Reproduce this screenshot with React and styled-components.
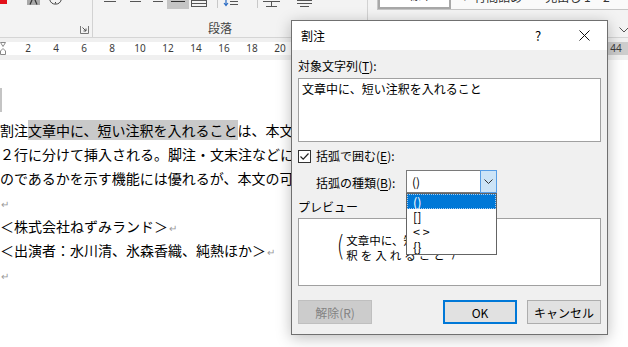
import styled, { createGlobalStyle } from 'styled-components';

const GlobalStyle = createGlobalStyle`
  html, body {
    margin: 0;
    padding: 0;
    background: #fff;
  }
  body {
    font-family: "Noto Sans CJK JP", "Noto Sans", sans-serif;
    color: #000;
  }
`;

const Screen = styled.div`
  position: relative;
  width: 628px;
  height: 347px;
  overflow: hidden;
  display: flex;
  flex-direction: column;
  background: #fff;
`;

/* ---------- ribbon ---------- */

const Ribbon = styled.div`
  flex: none;
  display: flex;
  height: 37px;
  background: #f3f3f3;
  border-bottom: 1px solid #d5d5d5;
`;

const Group = styled.div`
  flex: ${({ $w }) => ($w ? 'none' : '1')};
  width: ${({ $w }) => ($w ? `${$w}px` : 'auto')};
  display: flex;
  flex-direction: column;
  border-right: ${({ $last }) => ($last ? 'none' : '1px solid #d2d2d2')};
`;

const Strip = styled.div`
  flex: none;
  height: 10px;
  display: flex;
  align-items: flex-start;
`;

const Tool = styled.span`
  flex: none;
  display: block;
  width: ${({ $w }) => $w}px;
  height: ${({ $h }) => $h || 9}px;
  margin-left: ${({ $ml }) => $ml || 0}px;
  background: ${({ $active }) => ($active ? '#c5c5c5' : 'transparent')};

  svg {
    display: block;
  }
`;

const Sep = styled.span`
  flex: none;
  width: 1px;
  height: 8px;
  margin-left: ${({ $ml }) => $ml}px;
  background: #c8c8c8;
`;

const GroupFoot = styled.div`
  flex: 1;
  display: flex;
  align-items: flex-end;
  justify-content: ${({ $end }) => ($end ? 'flex-end' : 'flex-start')};
  padding: 0 ${({ $pr }) => $pr || 0}px ${({ $pb }) => $pb || 0}px ${({ $pl }) => $pl || 0}px;
`;

const GroupLabel = styled.span`
  font-size: 12px;
  line-height: 16px;
  color: #444;
`;

const Gallery = styled.div`
  flex: none;
  margin-left: 9px;
  height: 9px;
  display: flex;
  align-items: stretch;
  background: #fafafa;
  border-left: 1px solid #c6c6c6;
  border-bottom: 1px solid #c6c6c6;
  overflow: hidden;
`;

const StyleItem = styled.div`
  flex: none;
  width: ${({ $w }) => $w}px;
  box-sizing: border-box;
  display: flex;
  align-items: flex-end;
  justify-content: center;
  padding-bottom: 4px;
  overflow: hidden;
  font-size: 12px;
  line-height: 16px;
  color: #333;
  border: ${({ $active }) => ($active ? '2px solid #a8a8a8' : 'none')};
  border-top: none;
  background: ${({ $active }) => ($active ? '#fff' : 'transparent')};
`;

/* ---------- ruler ---------- */

const Ruler = styled.div`
  flex: none;
  height: 22px;
  box-sizing: border-box;
  padding-top: 4px;
  background: #f0f0f0;
`;

const RulerBand = styled.div`
  display: flex;
  height: 13px;
  background: linear-gradient(to right, #fff 0 588px, #cdcdcd 588px);
`;

const RulerMarker = styled.span`
  flex: none;
  width: 14px;

  svg {
    display: block;
  }
`;

const RulerNum = styled.span`
  flex: none;
  width: 28px;
  text-align: center;
  font-family: "Noto Sans", sans-serif;
  font-size: 10px;
  line-height: 13px;
  color: #3c3c3c;
`;

/* ---------- document ---------- */

const Doc = styled.div`
  flex: 1;
  background: #fff;
  padding-top: 28px;
  font-size: 14px;
  line-height: 24px;
  white-space: nowrap;
`;

const CornerMark = styled.div`
  width: 2px;
  height: 24px;
  margin-bottom: 6px;
  background: #c4c4c4;
`;

const DocLine = styled.div`
  height: 24px;
`;

const Marked = styled.span`
  background: #c9c9c9;
`;

const ParaMark = styled.span`
  font-size: 10px;
  color: #9a9a9a;
  margin-left: 1px;
`;

/* ---------- dialog ---------- */

const Dialog = styled.div`
  position: absolute;
  left: 291px;
  top: 20px;
  width: 317px;
  height: 315px;
  box-sizing: border-box;
  border: 1px solid #707070;
  background: #f0f0f0;
  box-shadow: 0 3px 14px rgba(0, 0, 0, 0.26);
  display: flex;
  flex-direction: column;
  font-size: 12px;
`;

const TitleBar = styled.div`
  flex: none;
  height: 29px;
  display: flex;
  align-items: center;
  background: #fff;
`;

const Title = styled.span`
  flex: 1;
  padding-left: 9px;
  line-height: 16px;
`;

const Caption = styled.span`
  width: 46px;
  height: 29px;
  display: flex;
  align-items: center;
  justify-content: center;
  font-size: 13px;

  svg {
    display: block;
  }
`;

const Body = styled.div`
  flex: 1;
  display: flex;
  flex-direction: column;
  padding: 8px 6px 0;
`;

const FieldLabel = styled.div`
  line-height: 16px;
  margin-top: ${({ $mt }) => $mt || 0}px;

  u {
    text-decoration-thickness: 1px;
    text-underline-offset: 2px;
  }
`;

const TextBox = styled.div`
  margin-top: 4px;
  height: 64px;
  box-sizing: border-box;
  padding: 2px 3px;
  background: #fff;
  border: 1px solid #a0a0a0;
  line-height: 16px;
`;

const CheckRow = styled.label`
  margin-top: 6px;
  height: 16px;
  display: flex;
  align-items: center;
  gap: 5px;
  line-height: 16px;

  u {
    text-underline-offset: 2px;
  }
`;

const CheckBox = styled.span`
  flex: none;
  width: 13px;
  height: 13px;
  box-sizing: border-box;
  border: 1px solid #333;
  background: #fff;

  svg {
    display: block;
  }
`;

const ComboRow = styled.div`
  margin-top: 6px;
  height: 23px;
  display: flex;
  align-items: center;
  padding-left: 18px;

  u {
    text-underline-offset: 2px;
  }
`;

const ComboLabel = styled.span`
  flex: none;
  width: 90px;
  line-height: 16px;
  padding-top: 2px;
`;

const Combo = styled.div`
  position: relative;
  flex: none;
  width: 91px;
  height: 23px;
  box-sizing: border-box;
  border: 1px solid #7a7a7a;
  background: #fff;
  display: flex;
`;

const ComboValue = styled.span`
  flex: 1;
  padding-left: 5px;
  line-height: 21px;
`;

const ComboButton = styled.span`
  flex: none;
  width: 17px;
  margin: -1px -1px -1px 0;
  box-sizing: border-box;
  border: 1px solid #569de5;
  background: #cce4f7;
  display: flex;
  align-items: center;
  justify-content: center;
`;

const DropList = styled.ul`
  position: absolute;
  left: -1px;
  top: 22px;
  width: 91px;
  margin: 0;
  padding: 0;
  list-style: none;
  box-sizing: border-box;
  border: 1px solid #646464;
  background: #fff;
  z-index: 2;
`;

const DropItem = styled.li`
  height: 15px;
  box-sizing: border-box;
  padding-left: 5px;
  font-size: 12.5px;
  line-height: 13px;
  white-space: pre;
  background: ${({ $selected }) => ($selected ? '#0078d7' : '#fff')};
  color: ${({ $selected }) => ($selected ? '#fff' : '#000')};
  border: 1px dotted ${({ $selected }) => ($selected ? '#a9cdf0' : 'transparent')};
`;

const PreviewBox = styled.div`
  margin-top: 3px;
  height: 68px;
  box-sizing: border-box;
  background: #fff;
  border: 1px solid #a0a0a0;
  padding: 14px 0 0 36px;
  display: flex;
  align-items: flex-start;
`;

const Paren = styled.span`
  flex: none;
  font-family: "DejaVu Sans", sans-serif;
  font-weight: 200;
  font-size: 29px;
  line-height: 29px;
  margin-top: -1px;
  transform: scaleX(0.7);
`;

const PreviewLines = styled.div`
  display: flex;
  flex-direction: column;
  font-size: 11.5px;
  line-height: 15px;
`;

const PreviewLine = styled.span`
  letter-spacing: ${({ $spread }) => ($spread ? '3px' : '0')};
`;

const ButtonRow = styled.div`
  margin-top: 14px;
  display: flex;
  gap: 10px;
`;

const Button = styled.button`
  width: 74px;
  height: 24px;
  box-sizing: border-box;
  margin: 0;
  margin-left: ${({ $push }) => ($push ? 'auto' : '0')};
  padding: 0;
  font-family: "Noto Sans CJK JP", "Noto Sans", sans-serif;
  font-size: 12px;
  color: ${({ disabled }) => (disabled ? '#838383' : '#000')};
  background: ${({ disabled }) => (disabled ? '#cccccc' : '#e1e1e1')};
  border: ${({ $default, disabled }) =>
    $default ? '2px solid #0078d7' : `1px solid ${disabled ? '#bfbfbf' : '#adadad'}`};
`;

const Hairline = ({ w, y = 1.5, x1 = 0, color = '#555' }) => (
  <svg width={w} height="9">
    <line x1={x1} y1={y} x2={w - x1} y2={y} stroke={color} strokeWidth="1" />
  </svg>
);

export default function App() {
  const rulerNums = [];
  for (let n = 2; n <= 44; n += 2) rulerNums.push(n);

  return (
    <>
      <GlobalStyle />
      <Screen>
        <Ribbon>
          <Group $w={92}>
            <Strip>
              <Tool $w={7}>
                <svg width="7" height="9"><rect x="0" y="0" width="7" height="4" fill="#e3101a" /></svg>
              </Tool>
              <Tool $w={13} $ml={20} $h={6}>
                <svg width="13" height="6">
                  <rect x="0" y="0" width="13" height="5" fill="#a9a9a9" />
                  <path d="M3 4.5 L5 0 M10 4.5 L8 0" stroke="#333" strokeWidth="1.2" />
                </svg>
              </Tool>
              <Tool $w={13} $ml={9}>
                <svg width="13" height="9">
                  <path d="M0.8 0 A6 6 0 0 0 12.2 0" fill="none" stroke="#444" strokeWidth="1" />
                  <path d="M6.5 2 L6.5 3.5" stroke="#444" strokeWidth="1" />
                </svg>
              </Tool>
            </Strip>
            <GroupFoot $end $pr={3} $pb={3}>
              <svg width="9" height="8">
                <path d="M0.5 0 V7.5 H8.5 V0" fill="none" stroke="#777" strokeWidth="1" />
                <path d="M2.5 1.5 L6 5 M6 2.5 V5 H3.5" fill="none" stroke="#555" strokeWidth="1" />
              </svg>
            </GroupFoot>
          </Group>

          <Group $w={274}>
            <Strip>
              <Tool $w={12} $ml={11}><Hairline w={12} /></Tool>
              <Tool $w={11} $ml={14}><Hairline w={11} /></Tool>
              <Tool $w={10} $ml={12}><Hairline w={10} /></Tool>
              <Tool $w={22} $ml={4} $active><Hairline w={22} x1={4} color="#333" /></Tool>
              <Tool $w={16} $ml={2}>
                <svg width="16" height="9">
                  <path d="M1 0.5 H15 M1 3.5 H15 M1 6.5 H15" stroke="#555" strokeWidth="1" />
                  <path d="M0.5 0 V7 M15.5 0 V7" stroke="#555" strokeWidth="1" />
                </svg>
              </Tool>
              <Sep $ml={10} />
              <Tool $w={15} $ml={5}>
                <svg width="15" height="9">
                  <path d="M3 0 V5 M1 3 L3 5.5 L5 3" fill="none" stroke="#2b6cc4" strokeWidth="1.2" />
                  <path d="M7 1.5 H15 M7 4.5 H15" stroke="#555" strokeWidth="1" />
                </svg>
              </Tool>
              <Sep $ml={19} />
              <Tool $w={17} $ml={5}>
                <svg width="17" height="9">
                  <path d="M0 1.5 H17 M8.5 1.5 V7 M3 6.5 H14" stroke="#555" strokeWidth="1" />
                </svg>
              </Tool>
              <Tool $w={15} $ml={17}>
                <svg width="15" height="9">
                  <path d="M0 0.5 H15 M0 3.5 H15 M3 6.5 H12" stroke="#555" strokeWidth="1" />
                </svg>
              </Tool>
            </Strip>
            <GroupFoot $pl={115} $pb={1}>
              <GroupLabel>段落</GroupLabel>
            </GroupFoot>
          </Group>

          <Group $last>
            <Strip>
              <Gallery>
                <StyleItem $w={73} $active>↵ 標準</StyleItem>
                <StyleItem $w={82}>↵ 行間詰め</StyleItem>
                <StyleItem $w={70}>見出し 1</StyleItem>
                <StyleItem $w={40}>見出し 2</StyleItem>
              </Gallery>
            </Strip>
            <GroupFoot $end $pr={14} $pb={4}>
              <svg width="10" height="6">
                <path d="M0.5 0.5 L5 5 L9.5 0.5" fill="none" stroke="#555" strokeWidth="1" />
              </svg>
            </GroupFoot>
          </Group>
        </Ribbon>

        <Ruler>
          <RulerBand>
            <RulerMarker>
              <svg width="6" height="13">
                <path d="M0.5 0.5 H5.5 L3 4.5 Z M0.5 12.5 H5.5 V9 L3 6.5 L0.5 9 Z" fill="#fff" stroke="#888" strokeWidth="1" />
              </svg>
            </RulerMarker>
            {rulerNums.map((n) => (
              <RulerNum key={n}>{n}</RulerNum>
            ))}
          </RulerBand>
        </Ruler>

        <Doc>
          <CornerMark />
          <DocLine>
            割注<Marked>文章中に、短い注釈を入れること</Marked>は、本文の途中に小さな文字で
          </DocLine>
          <DocLine>２行に分けて挿入される。脚注・文末注などに比べると</DocLine>
          <DocLine>のであるかを示す機能には優れるが、本文の可読性は</DocLine>
          <DocLine><ParaMark>↵</ParaMark></DocLine>
          <DocLine>＜株式会社ねずみランド＞<ParaMark>↵</ParaMark></DocLine>
          <DocLine>＜出演者：水川清、氷森香織、純熱ほか＞<ParaMark>↵</ParaMark></DocLine>
          <DocLine><ParaMark>↵</ParaMark></DocLine>
        </Doc>

        <Dialog>
          <TitleBar>
            <Title>割注</Title>
            <Caption>?</Caption>
            <Caption>
              <svg width="11" height="11">
                <path d="M0.5 0.5 L10.5 10.5 M10.5 0.5 L0.5 10.5" stroke="#111" strokeWidth="1" />
              </svg>
            </Caption>
          </TitleBar>

          <Body>
            <FieldLabel>対象文字列(<u>T</u>):</FieldLabel>
            <TextBox>文章中に、短い注釈を入れること</TextBox>

            <CheckRow>
              <CheckBox>
                <svg width="11" height="11">
                  <path d="M1.5 5.5 L4.2 8.2 L9.5 2.5" fill="none" stroke="#222" strokeWidth="1.2" />
                </svg>
              </CheckBox>
              <span>括弧で囲む(<u>E</u>):</span>
            </CheckRow>

            <ComboRow>
              <ComboLabel>括弧の種類(<u>B</u>):</ComboLabel>
              <Combo>
                <ComboValue>()</ComboValue>
                <ComboButton>
                  <svg width="9" height="5">
                    <path d="M0.5 0.5 L4.5 4.5 L8.5 0.5" fill="none" stroke="#333" strokeWidth="1" />
                  </svg>
                </ComboButton>
                <DropList>
                  <DropItem $selected>()</DropItem>
                  <DropItem>[]</DropItem>
                  <DropItem>{'< >'}</DropItem>
                  <DropItem>{'{}'}</DropItem>
                </DropList>
              </Combo>
            </ComboRow>

            <FieldLabel $mt={6}>プレビュー</FieldLabel>
            <PreviewBox>
              <Paren>(</Paren>
              <PreviewLines>
                <PreviewLine>文章中に、短い注</PreviewLine>
                <PreviewLine $spread>釈を入れること</PreviewLine>
              </PreviewLines>
              <Paren>)</Paren>
            </PreviewBox>

            <ButtonRow>
              <Button disabled>解除(R)</Button>
              <Button $push $default>OK</Button>
              <Button>キャンセル</Button>
            </ButtonRow>
          </Body>
        </Dialog>
      </Screen>
    </>
  );
}
